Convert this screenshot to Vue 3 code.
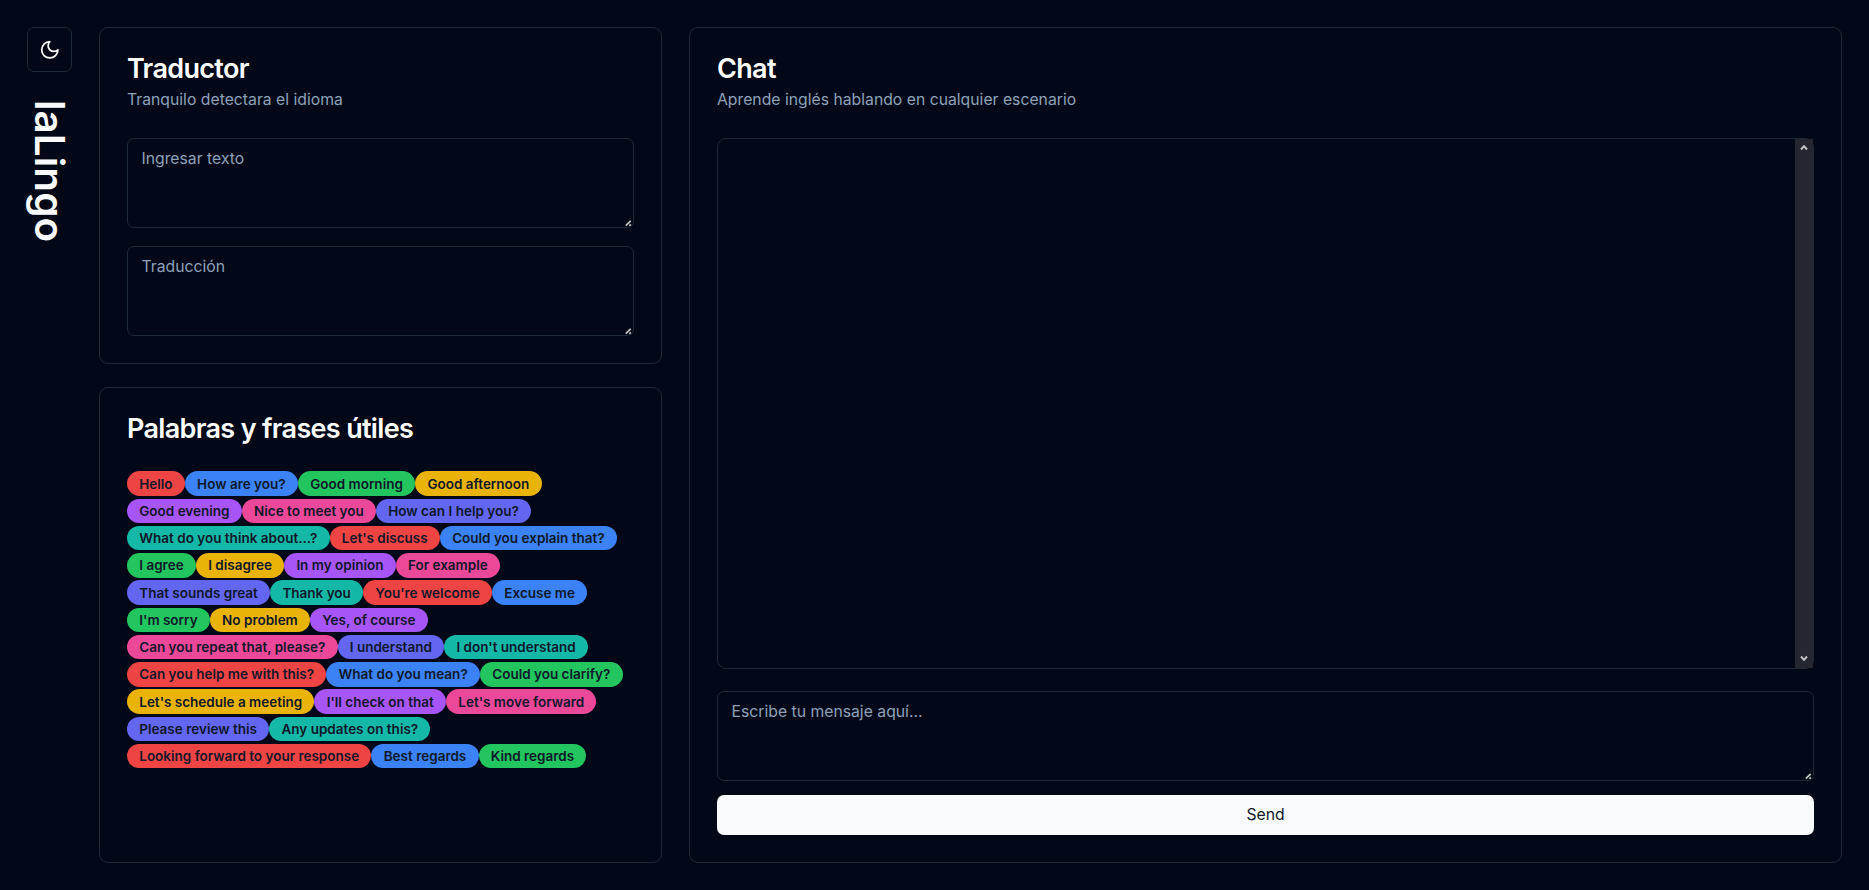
<script setup>
const colors = ['red', 'blue', 'green', 'yellow', 'purple', 'pink', 'indigo', 'teal']
const phrases = [
  'Hello', 'How are you?', 'Good morning', 'Good afternoon', 'Good evening',
  'Nice to meet you', 'How can I help you?', 'What do you think about...?',
  "Let's discuss", 'Could you explain that?', 'I agree', 'I disagree',
  'In my opinion', 'For example', 'That sounds great', 'Thank you',
  "You're welcome", 'Excuse me', "I'm sorry", 'No problem', 'Yes, of course',
  'Can you repeat that, please?', 'I understand', "I don't understand",
  'Can you help me with this?', 'What do you mean?', 'Could you clarify?',
  "Let's schedule a meeting", "I'll check on that", "Let's move forward",
  'Please review this', 'Any updates on this?',
  'Looking forward to your response', 'Best regards', 'Kind regards',
]
</script>

<template>
  <div class="page">
    <aside class="rail">
      <button class="toggle" aria-label="Tema">
        <svg viewBox="0 0 24 24">
          <path d="M12 3a6 6 0 0 0 9 9 9 9 0 1 1-9-9Z" />
        </svg>
      </button>
      <h1 class="brand">laLingo</h1>
    </aside>

    <div class="left">
      <section class="card translator">
        <h2>Traductor</h2>
        <p class="desc">Tranquilo detectara el idioma</p>
        <div class="fields">
          <div class="field">
            <textarea placeholder="Ingresar texto"></textarea>
            <svg class="grip" viewBox="0 0 7 7"><path d="M.8 5.7 5.7.8M4.4 5.8 5.8 4.4" /></svg>
          </div>
          <div class="field">
            <textarea placeholder="Traducción"></textarea>
            <svg class="grip" viewBox="0 0 7 7"><path d="M.8 5.7 5.7.8M4.4 5.8 5.8 4.4" /></svg>
          </div>
        </div>
      </section>

      <section class="card phrases">
        <h2>Palabras y frases útiles</h2>
        <div class="badges">
          <span v-for="(p, i) in phrases" :key="p" class="badge" :class="colors[i % 8]">{{ p }}</span>
        </div>
      </section>
    </div>

    <section class="card chat">
      <h2>Chat</h2>
      <p class="desc">Aprende inglés hablando en cualquier escenario</p>
      <div class="log">
        <div class="scrollbar">
          <svg viewBox="0 0 8 7"><path d="M1 5.5 4 2.2 7 5.5" /></svg>
          <svg viewBox="0 0 8 7"><path d="M1 1.5 4 4.8 7 1.5" /></svg>
        </div>
      </div>
      <div class="field">
        <textarea placeholder="Escribe tu mensaje aquí..."></textarea>
        <svg class="grip" viewBox="0 0 7 7"><path d="M.8 5.7 5.7.8M4.4 5.8 5.8 4.4" /></svg>
      </div>
      <button class="send">Send</button>
    </section>
  </div>
</template>

<style>
body {
  background: #020817;
}
</style>

<style scoped>
* {
  box-sizing: border-box;
  margin: 0;
  font-family: Inter, 'Liberation Sans', sans-serif;
}
.page {
  display: flex;
  gap: 27px;
  height: 890px;
  padding: 27px;
  background: #020817;
  color: #f8fafc;
}
.rail {
  width: 45px;
  flex: none;
  display: flex;
  flex-direction: column;
  align-items: center;
  gap: 28px;
}
.toggle {
  width: 45px;
  height: 45px;
  flex: none;
  display: flex;
  align-items: center;
  justify-content: center;
  padding: 0;
  border: 1px solid #1e293b;
  border-radius: 7px;
  background: transparent;
  color: #f8fafc;
}
.toggle svg {
  width: 21.6px;
  height: 21.6px;
  fill: none;
  stroke: currentColor;
  stroke-width: 2;
  stroke-linecap: round;
  stroke-linejoin: round;
}
.brand {
  writing-mode: vertical-rl;
  font-size: 40.5px;
  line-height: 45px;
  font-weight: 600;
}
.left {
  width: 563px;
  flex: none;
  display: flex;
  flex-direction: column;
  gap: 23px;
}
.card {
  border: 1px solid #1e293b;
  border-radius: 9px;
  padding: 27px;
}
.translator {
  height: 337px;
}
.phrases {
  flex: 1;
}
h2 {
  font-size: 27px;
  line-height: 27px;
  font-weight: 600;
  letter-spacing: -0.675px;
  color: #fff;
}
.desc {
  margin-top: 7px;
  font-size: 15.75px;
  line-height: 22.5px;
  color: #8ca2ba;
}
.fields {
  margin-top: 26px;
  display: flex;
  flex-direction: column;
  gap: 18px;
}
.field {
  position: relative;
  height: 90px;
  flex: none;
}
textarea {
  display: block;
  width: 100%;
  height: 90px;
  resize: none;
  padding: 9px 13.5px;
  border: 1px solid #1e293b;
  border-radius: 7px;
  background: transparent;
  color: #f8fafc;
  font-size: 15.75px;
  line-height: 22.5px;
  outline: none;
}
textarea::placeholder {
  color: #8ca2ba;
  opacity: 1;
}
.grip {
  position: absolute;
  right: 2px;
  bottom: 1px;
  width: 7px;
  height: 7px;
  fill: none;
  stroke: #c4c4c4;
  stroke-width: 1.7;
}
.badges {
  margin-top: 29.35px;
  display: flex;
  flex-wrap: wrap;
  row-gap: 2.75px;
}
.badge {
  height: 24.5px;
  padding: 3.25px 12.25px;
  border-radius: 13px;
  font-size: 13.5px;
  line-height: 18px;
  font-weight: 600;
  white-space: nowrap;
  color: #0f172a;
}
.red { background: #ef4444; }
.blue { background: #3b82f6; }
.green { background: #22c55e; }
.yellow { background: #eab308; }
.purple { background: #a855f7; }
.pink { background: #ec4899; }
.indigo { background: #6366f1; }
.teal { background: #14b8a6; }
.chat {
  flex: 1;
  display: flex;
  flex-direction: column;
}
.log {
  flex: 1;
  margin: 26px 0 22px;
  display: flex;
  justify-content: flex-end;
  border: 1px solid #1e293b;
  border-radius: 9px;
}
.scrollbar {
  width: 18px;
  display: flex;
  flex-direction: column;
  justify-content: space-between;
  align-items: center;
  padding: 5px 1px 6px 0;
  background: #242631;
}
.scrollbar svg {
  width: 8px;
  height: 7px;
  fill: none;
  stroke: #c4c4c4;
  stroke-width: 2;
}
.send {
  flex: none;
  height: 40px;
  margin-top: 14px;
  border: 0;
  border-radius: 7px;
  background: #f8fafc;
  color: #0f172a;
  font-size: 15.75px;
  line-height: 22.5px;
  font-weight: 400;
}
</style>
